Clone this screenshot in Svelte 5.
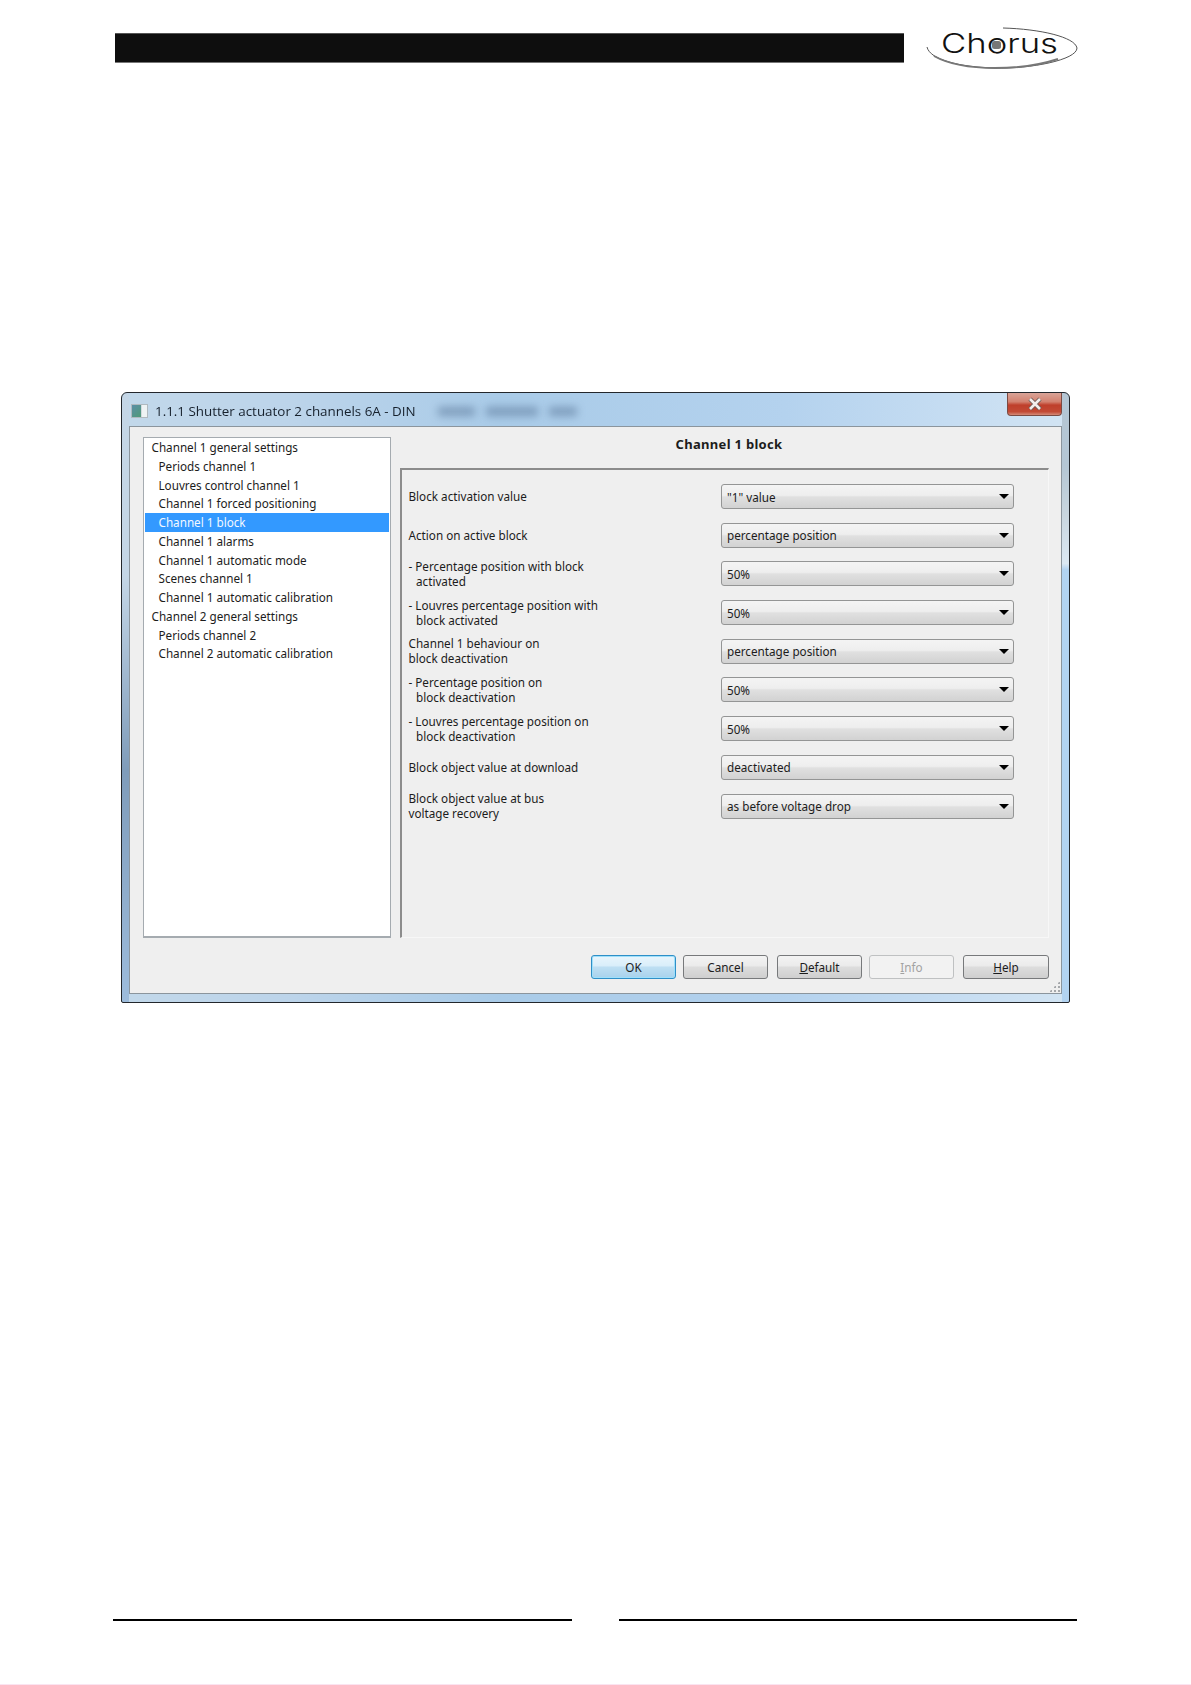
<script>
  const sections = [
    { label: 'Channel 1 general settings', root: true },
    { label: 'Periods channel 1' },
    { label: 'Louvres control channel 1' },
    { label: 'Channel 1 forced positioning' },
    { label: 'Channel 1 block', active: true },
    { label: 'Channel 1 alarms' },
    { label: 'Channel 1 automatic mode' },
    { label: 'Scenes channel 1' },
    { label: 'Channel 1 automatic calibration' },
    { label: 'Channel 2 general settings', root: true },
    { label: 'Periods channel 2' },
    { label: 'Channel 2 automatic calibration' }
  ];

  const params = [
    { lines: ['Block activation value'], value: '"1" value' },
    { lines: ['Action on active block'], value: 'percentage position' },
    { lines: ['- Percentage position with block', 'activated'], value: '50%', dash: true },
    { lines: ['- Louvres percentage position with', 'block activated'], value: '50%', dash: true },
    { lines: ['Channel 1 behaviour on', 'block deactivation'], value: 'percentage position' },
    { lines: ['- Percentage position on', 'block deactivation'], value: '50%', dash: true },
    { lines: ['- Louvres percentage position on', 'block deactivation'], value: '50%', dash: true },
    { lines: ['Block object value at download'], value: 'deactivated' },
    { lines: ['Block object value at bus', 'voltage recovery'], value: 'as before voltage drop' }
  ];
</script>

<div class="page">
  <header class="head">
    <div class="bar"></div>
    <svg class="logo" width="180" height="60" viewBox="0 0 180 60">
      <path class="swoosh" d="M93 13 C130 14 165 22 167 33 C167 45 120 54 85 53 C50 52 20 45 17 32" />
      <path class="swoosh thick" d="M24 41 C40 50 62 53 85 53 C105 53 130 50 148 44" />
      <text x="31" y="37.5" textLength="117" lengthAdjust="spacingAndGlyphs">Chorus</text>
      <rect class="dot" x="82" y="26" width="9" height="8" rx="2.5" />
    </svg>
  </header>

  <section class="window">
    <div class="titlebar">
      <span class="appicon"><i></i><i></i></span>
      <span class="title">1.1.1 Shutter actuator 2 channels 6A - DIN</span>
      <span class="smudges"><i></i><i></i><i></i></span>
      <span class="close">
        <svg width="16" height="14" viewBox="0 0 16 14">
          <path class="under" d="M3 2 L13 12 M13 2 L3 12" />
          <path d="M3 2 L13 12 M13 2 L3 12" />
        </svg>
      </span>
    </div>

    <div class="client">
      <div class="main">
        <ul class="tree">
          {#each sections as s}
            <li class:root={s.root} class:active={s.active}>{s.label}</li>
          {/each}
        </ul>

        <div class="side">
          <h2>Channel 1 block</h2>
          <div class="panel">
            {#each params as p}
              <div class="row">
                <div class="label" class:dash={p.dash}>
                  {#each p.lines as line}
                    <div>{line}</div>
                  {/each}
                </div>
                <div class="select">
                  <span>{p.value}</span>
                  <b class="arrow"></b>
                </div>
              </div>
            {/each}
          </div>
        </div>
      </div>

      <div class="buttons">
        <button class="primary">OK</button>
        <button>Cancel</button>
        <button class="wide"><u>D</u>efault</button>
        <button disabled><u>I</u>nfo</button>
        <button class="wide"><u>H</u>elp</button>
      </div>
      <span class="grip"></span>
    </div>
  </section>

  <footer class="foot">
    <div class="rules"><span></span><span></span></div>
    <div class="strip"></div>
  </footer>
</div>

<style>
  :global(body) {
    background: #fff;
  }
  .page {
    width: 1191px;
    height: 1685px;
    display: flex;
    flex-direction: column;
    overflow: hidden;
    font-family: "Noto Sans", Tahoma, sans-serif;
    font-size: 11.7px;
    color: #1c1c1c;
  }

  .head {
    display: flex;
    align-items: flex-start;
    gap: 6px;
    padding: 15px 0 0 115px;
  }
  .bar {
    width: 789px;
    height: 30px;
    margin-top: 18px;
    box-sizing: border-box;
    background: #0e0e0e;
    border-top: 1px solid #555;
    border-bottom: 1px solid #777;
  }
  .logo text {
    font-family: Inter, "DejaVu Sans", sans-serif;
    font-size: 27px;
    font-weight: 300;
    fill: #111;
  }
  .swoosh {
    fill: none;
    stroke: #555;
    stroke-width: 1;
  }
  .swoosh.thick {
    stroke: #777;
    stroke-width: 2;
  }
  .dot {
    fill: #777;
  }

  .window {
    width: 949px;
    height: 611px;
    margin: 317px 0 0 121px;
    position: relative;
    box-sizing: border-box;
    display: flex;
    flex-direction: column;
    border: 1px solid #23272c;
    border-radius: 6px 6px 2px 2px;
    padding: 0 7px 8px;
    background:
      linear-gradient(180deg, #b4c6d4 12%, #c9d6df 20%, #dbe8f3 28%, #b2d3f1 29%) right top / 7px 100% no-repeat,
      linear-gradient(180deg, #c4d6e6 30%, #7f9cba 62%, #9dbcdc 100%) left top / 7px 100% no-repeat,
      linear-gradient(90deg, #c2d8ea 0, #bcd4ea 18%, #a9cbe8 40%, #b4d2ee 70%, #c6ddf2 88%, #d2e4f3 100%);
    filter: blur(0.35px);
  }
  .titlebar {
    height: 33px;
    display: flex;
    align-items: center;
    flex: none;
  }
  .appicon {
    width: 17px;
    height: 14px;
    margin: 3px 7px 0 2px;
    display: flex;
    border: 1px solid #b0b9bf;
    box-sizing: border-box;
    background: #d3dade;
  }
  .appicon i:first-child {
    width: 9px;
    background: linear-gradient(135deg, #5b8ea6, #4f9a78);
  }
  .appicon i:last-child {
    width: 5px;
    margin-left: 1px;
    background: #eef3f4;
  }
  .title {
    font-family: "Open Sans", sans-serif;
    font-size: 13.4px;
    color: #16202c;
    white-space: nowrap;
    margin-top: 2px;
  }
  .smudges {
    display: flex;
    gap: 11px;
    margin: 3px 0 0 22px;
  }
  .smudges i {
    width: 37px;
    height: 9px;
    background: #5d7a9c;
    opacity: 0.6;
    filter: blur(4px);
  }
  .smudges i:nth-child(2) {
    width: 52px;
  }
  .smudges i:last-child {
    width: 28px;
  }
  .close {
    margin-left: auto;
    align-self: flex-start;
    width: 55px;
    height: 23px;
    box-sizing: border-box;
    display: flex;
    align-items: center;
    justify-content: center;
    border: 1px solid #7b4a42;
    border-top: none;
    border-radius: 0 0 4px 4px;
    background: linear-gradient(180deg, #d9a498 0, #d3816f 40%, #bf3f2b 55%, #c24a35 85%, #d48a78 100%);
  }
  .close svg path {
    fill: none;
    stroke: #f4f0ee;
    stroke-width: 2.6;
  }
  .close svg path.under {
    stroke: #6d5a55;
    stroke-width: 4.4;
  }

  .client {
    flex: 1;
    position: relative;
    box-sizing: border-box;
    background: #efefef;
    border: 1px solid #8b959d;
    padding: 10px 12px 14px 13px;
    display: flex;
    flex-direction: column;
  }
  .main {
    display: flex;
    gap: 9px;
    height: 501px;
  }
  .tree {
    width: 248px;
    margin: 0;
    padding: 0 1px;
    box-sizing: border-box;
    list-style: none;
    background: #fff;
    border: 1px solid #a5abb0;
    border-bottom-width: 2px;
  }
  .tree li {
    height: 18.75px;
    line-height: 18.75px;
    padding-left: 13.5px;
    white-space: nowrap;
  }
  .tree li.root {
    padding-left: 6.5px;
  }
  .tree li.active {
    background: #3399ff;
    color: #f2f8ff;
  }

  .side {
    flex: 1;
    display: flex;
    flex-direction: column;
  }
  h2 {
    margin: 0;
    height: 31px;
    box-sizing: border-box;
    padding: 0 0 0 9px;
    text-align: center;
    font-size: 13px;
    font-weight: 700;
    letter-spacing: 0.3px;
    line-height: 15px;
  }
  .panel {
    flex: 1;
    box-sizing: border-box;
    border: 1px solid #f7f7f7;
    border-top: 2px solid #8c8c8c;
    border-left: 2px solid #8c8c8c;
    padding: 14px 0 0 6.5px;
    display: flex;
    flex-direction: column;
    gap: 13.7px;
  }
  .row {
    display: grid;
    grid-template-columns: 312.5px 293px;
    grid-template-rows: 25px;
    align-items: center;
  }
  .label {
    line-height: 15px;
  }
  .label.dash div:last-child:not(:first-child) {
    padding-left: 7.5px;
  }
  .select {
    height: 25px;
    box-sizing: border-box;
    display: flex;
    align-items: center;
    justify-content: space-between;
    padding: 0 4px 0 5px;
    border: 1px solid #949595;
    border-radius: 3px;
    background: linear-gradient(180deg, #f4f4f4 0, #eeeeee 45%, #e0e0e0 52%, #d2d2d2 100%);
  }
  .arrow {
    width: 0;
    height: 0;
    border: 5px solid transparent;
    border-top: 5px solid #000;
    border-bottom: none;
  }

  .buttons {
    display: flex;
    justify-content: flex-end;
    gap: 7px;
    margin-top: 17px;
  }
  button {
    width: 85px;
    height: 24px;
    padding: 0;
    font: inherit;
    color: inherit;
    border: 1px solid #77797b;
    border-radius: 3px;
    background: linear-gradient(180deg, #f3f3f3 0, #ebebeb 45%, #dddddd 50%, #cfcfcf 100%);
  }
  button.wide {
    margin-left: 2px;
  }
  button:last-child {
    width: 86px;
  }
  button.primary {
    border-color: #2f8fc7;
    box-shadow: inset 0 0 0 1px #9fe0fb;
    background: linear-gradient(180deg, #e9f5fc 0, #d9eefa 45%, #bedff3 50%, #a8d2ec 100%);
  }
  button:disabled {
    color: #a2a2a2;
    border-color: #bfc1c2;
    background: #f2f2f2;
  }
  .grip {
    position: absolute;
    right: 1px;
    bottom: 1px;
    width: 11px;
    height: 11px;
    background: radial-gradient(circle, #a5a8ab 0.8px, transparent 1px) 0 0 / 4px 4px;
    clip-path: polygon(100% 0, 100% 100%, 0 100%);
  }

  .foot {
    margin-top: auto;
  }
  .rules {
    display: flex;
    justify-content: space-between;
    padding: 0 114px 63px 113px;
  }
  .rules span {
    width: 459px;
    height: 2px;
    background: #000;
  }
  .rules span:last-child {
    width: 458px;
  }
  .strip {
    height: 1px;
    background: #fbe4f1;
  }
</style>
